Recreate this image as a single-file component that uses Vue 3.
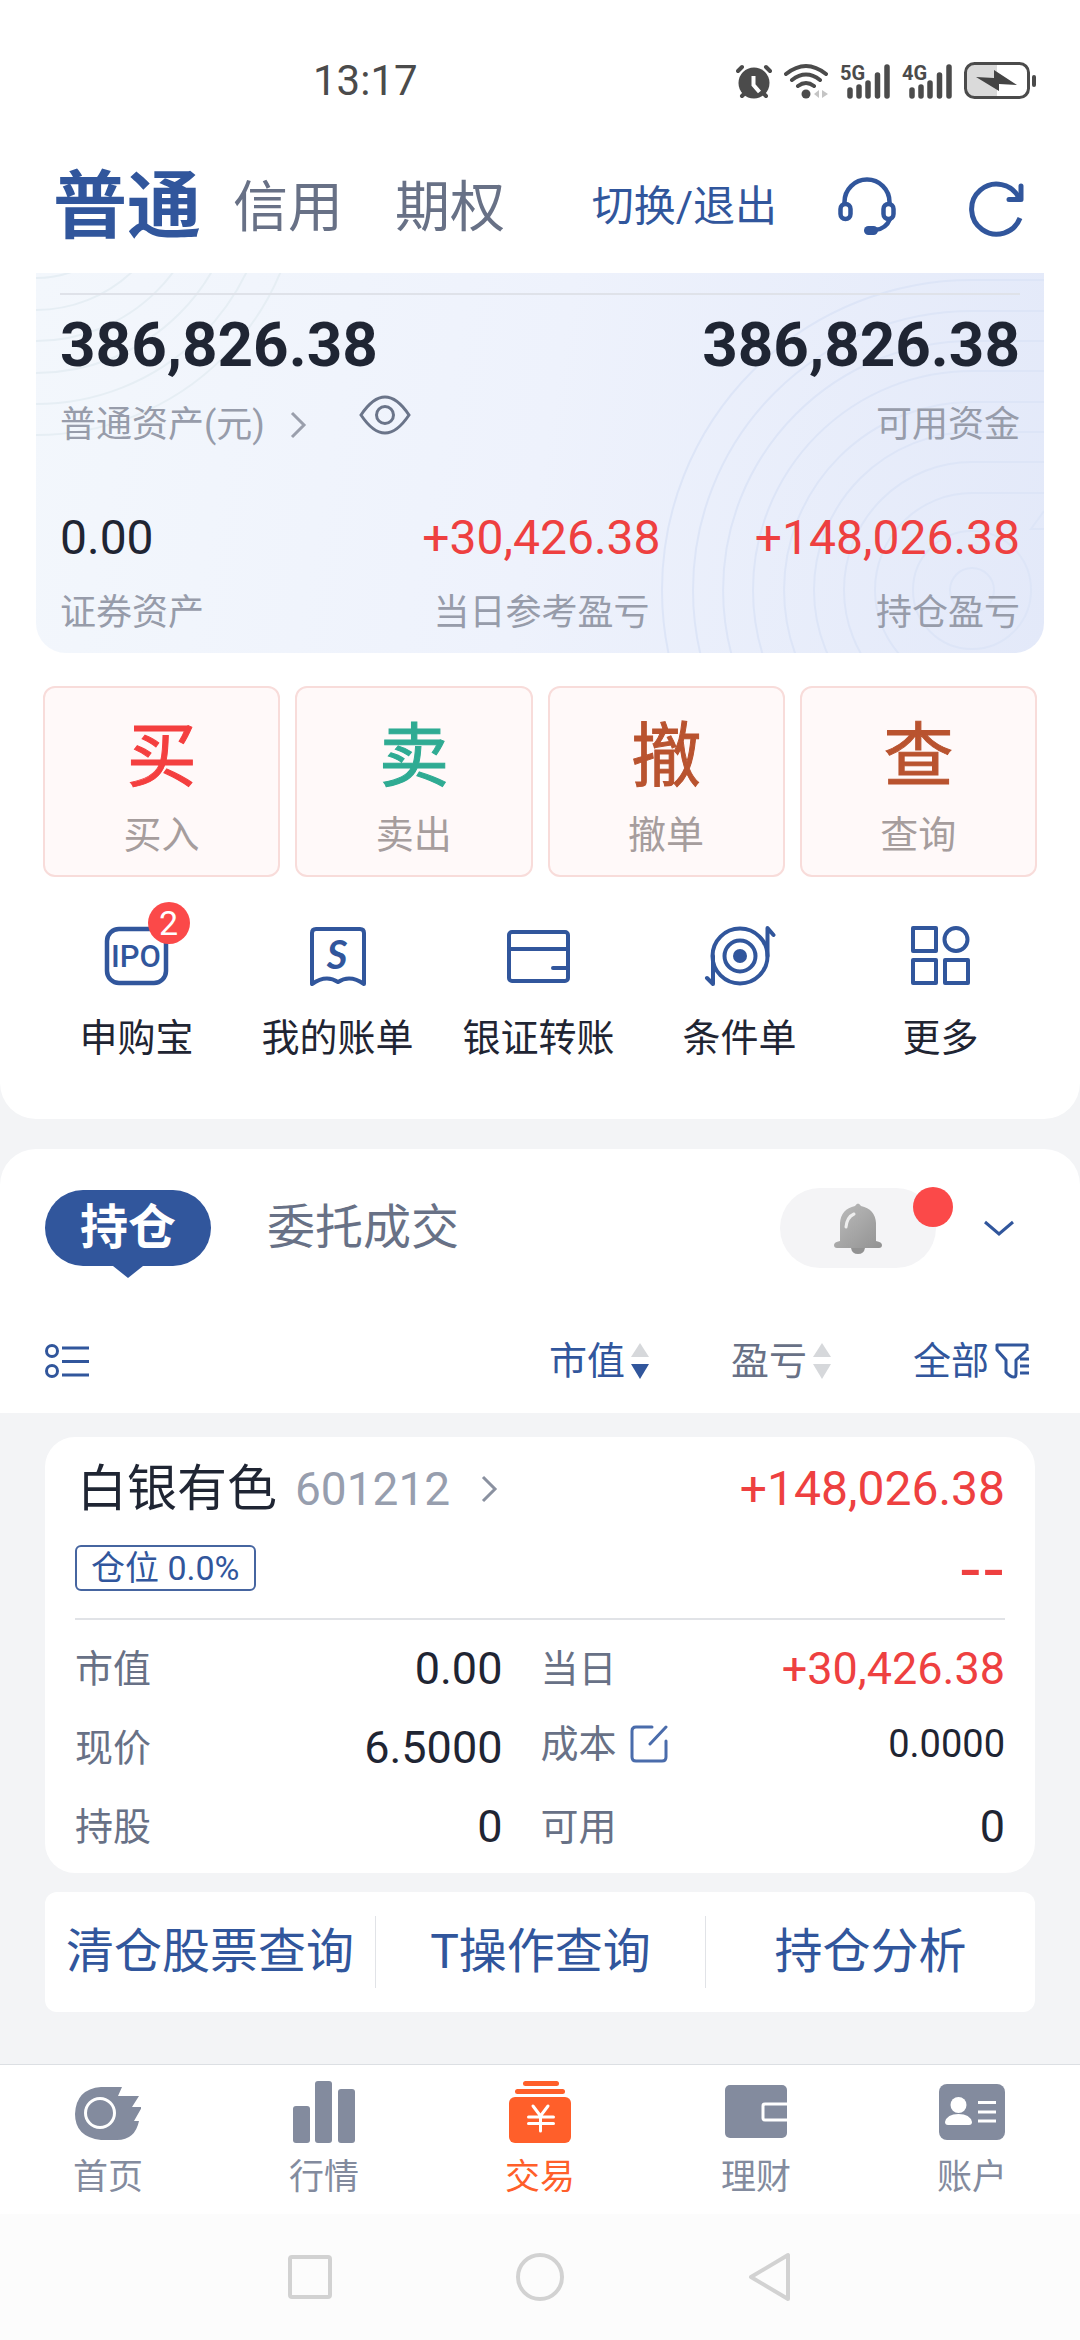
<script setup>
import { ref } from 'vue'

const accountTabs = ['普通', '信用', '期权']
const activeAccount = ref('普通')

const assetsVisible = ref(true)

const actions = [
  { glyph: '买', label: '买入', tone: 'red' },
  { glyph: '卖', label: '卖出', tone: 'green' },
  { glyph: '撤', label: '撤单', tone: 'brown' },
  { glyph: '查', label: '查询', tone: 'brown' },
]

const shortcuts = [
  { id: 'ipo', label: '申购宝', badge: 2 },
  { id: 'bill', label: '我的账单' },
  { id: 'bank', label: '银证转账' },
  { id: 'condition', label: '条件单' },
  { id: 'more', label: '更多' },
]

const sorts = [
  { key: 'value', label: '市值' },
  { key: 'profit', label: '盈亏' },
]
const sortKey = ref('value')

const stock = {
  name: '白银有色',
  code: '601212',
  profit: '+148,026.38',
  ratio: '0.0%',
  cells: [
    { label: '市值', value: '0.00' },
    { label: '当日', value: '+30,426.38', up: true },
    { label: '现价', value: '6.5000' },
    { label: '成本', value: '0.0000', editable: true },
    { label: '持股', value: '0' },
    { label: '可用', value: '0' },
  ],
}

const tools = ['清仓股票查询', 'T操作查询', '持仓分析']

const navItems = [
  { id: 'home', label: '首页' },
  { id: 'market', label: '行情' },
  { id: 'trade', label: '交易' },
  { id: 'wealth', label: '理财' },
  { id: 'account', label: '账户' },
]
const activeNav = ref('trade')

// Radii of the contour lines behind the asset panel
const leftArcs = [108, 140, 171, 203, 234, 265]
const rightArcs = [97, 128, 158, 188, 219, 249, 279, 310]
</script>

<template>
  <div class="page">
    <section class="top">
      <div class="status">
        <span class="clock">13:17</span>
        <svg width="36" height="36" viewBox="0 0 36 36" fill="none" stroke="#4b4b4b" stroke-width="4" stroke-linecap="round">
          <circle cx="18" cy="20" r="15.5" fill="#4b4b4b" stroke="none" />
          <path d="M2 8L6 4M34 8L30 4M6 33l4-4M30 33l-4-4" />
          <path d="M17.500 13v9l6 7" stroke="#fff" stroke-linecap="butt" />
        </svg>
        <svg width="44" height="36" viewBox="0 0 44 36" fill="none" stroke="#4b4b4b" stroke-width="4" stroke-linecap="round">
          <path d="M2 11Q22 -5 42 11M8 17Q22 6 36 17M14 23Q22 17 30 23" />
          <circle cx="22" cy="31" r="4.500" fill="#4b4b4b" stroke="none" />
          <path d="M35 27v8l-5-4zM38 27v8l6-4z" fill="#c4c4c4" stroke="none" />
        </svg>
        <svg v-for="net in ['5G', '4G']" :key="net" width="50" height="48" viewBox="0 0 50 48">
          <text x="0" y="23" class="net">{{ net }}</text>
          <path d="M10 33v6M19 30v9M28 26v13M37.500 18v21M47 10v29" stroke="#4b4b4b" stroke-width="5.500" stroke-linecap="round" />
        </svg>
        <svg width="73" height="38" viewBox="0 0 73 38">
          <path d="M9 3h24v32H9q-6 0-6-6V9q0-6 6-6z" fill="#dadada" />
          <rect x="1.500" y="1.500" width="63" height="34" rx="9" fill="none" stroke="#4b4b4b" stroke-width="3" />
          <path d="M12 15l18 1V8l23 15-18-1v7z" fill="#444" />
          <rect x="68" y="13" width="4" height="12" rx="2" fill="#4b4b4b" />
        </svg>
      </div>

      <header class="header">
        <button
          v-for="tab in accountTabs"
          :key="tab"
          :class="['account', { active: tab === activeAccount }]"
          @click="activeAccount = tab"
        >
          {{ tab }}
        </button>
        <a class="switch" href="#">切换/退出</a>
        <button class="icon-btn" aria-label="客服">
          <svg width="60" height="60" viewBox="0 0 60 60" fill="none" stroke="#31569c" stroke-width="4.500">
            <path d="M7.500 27v-2a22.500 22.500 0 0 1 45 0v2" />
            <rect x="3.500" y="27" width="10" height="15" rx="5" />
            <rect x="46.500" y="27" width="10" height="15" rx="5" />
            <path d="M53 42q-4 10-15 11" />
            <rect x="27" y="49" width="14" height="9" rx="4.500" fill="#31569c" stroke="none" />
          </svg>
        </button>
        <button class="icon-btn refresh" aria-label="刷新">
          <svg width="56" height="60" viewBox="0 0 56 60" fill="none" stroke="#31569c" stroke-width="5" stroke-linejoin="round">
            <path d="M51 41A25 25 0 1 1 50 21" />
            <path d="M52 9v13.500H40" stroke-linecap="round" />
          </svg>
        </button>
      </header>

      <div class="assets">
        <svg class="contours" viewBox="0 0 1008 380" preserveAspectRatio="xMaxYMin slice" fill="none" stroke-width="2">
          <circle v-for="r in leftArcs" :key="r" cx="0" cy="-103" :r="r" stroke="#e6eef4" />
          <g stroke="#dde5f7">
            <path v-for="r in rightArcs" :key="r" :d="`M1008 ${317 - r}H936a${r} ${r} 0 0 0 0 ${2 * r}`" />
            <circle cx="936" cy="317" r="22" />
            <circle cx="936" cy="317" r="59" />
            <path d="M1008 238l-13 18h13" />
          </g>
        </svg>
        <div class="asset-main">
          <div>
            <div class="total">386,826.38</div>
            <div class="caption-row">
              <a class="caption" href="#">普通资产(元)</a>
              <svg class="caption-arrow" width="18" height="28" viewBox="0 0 18 28" fill="none" stroke="#9a9fac" stroke-width="3">
                <path d="M3 2l12 12L3 26" />
              </svg>
              <button class="icon-btn eye" aria-label="显示资产" @click="assetsVisible = !assetsVisible">
                <svg width="52" height="40" viewBox="0 0 52 40" fill="none" stroke="#6a7489" stroke-width="3">
                  <path d="M2 20Q14 2 26 2T50 20Q38 38 26 38T2 20z" />
                  <circle cx="26" cy="20" r="8.500" />
                </svg>
              </button>
            </div>
          </div>
          <div class="right">
            <div class="total">386,826.38</div>
            <div class="caption-row"><span class="caption">可用资金</span></div>
          </div>
        </div>
        <div class="asset-sub">
          <div>
            <div class="amount">0.00</div>
            <div class="caption">证券资产</div>
          </div>
          <div class="center">
            <div class="amount up">+30,426.38</div>
            <div class="caption">当日参考盈亏</div>
          </div>
          <div class="right">
            <div class="amount up">+148,026.38</div>
            <div class="caption">持仓盈亏</div>
          </div>
        </div>
      </div>

      <div class="actions">
        <button v-for="action in actions" :key="action.label" class="action">
          <span :class="['glyph', action.tone]">{{ action.glyph }}</span>
          <span class="action-label">{{ action.label }}</span>
        </button>
      </div>

      <div class="shortcuts">
        <a v-for="item in shortcuts" :key="item.id" class="shortcut" href="#">
          <span class="shortcut-icon">
            <svg width="72" height="64" viewBox="0 0 72 64" fill="none" stroke="#31569c" stroke-width="4" stroke-linecap="round" stroke-linejoin="round">
              <template v-if="item.id === 'ipo'">
                <rect x="6" y="5" width="59" height="54" rx="12" stroke-width="4.500" />
                <text x="35" y="43" class="ipo">IPO</text>
              </template>
              <template v-else-if="item.id === 'bill'">
                <path d="M10 60V9q0-4 4-4h44q4 0 4 4v51q-14-10-26-2q-12-8-26 2z" />
                <text x="35" y="45" class="bill">S</text>
              </template>
              <template v-else-if="item.id === 'bank'">
                <rect x="6" y="8" width="59" height="49" rx="3" />
                <path d="M6 25h59M50 44h15" />
              </template>
              <template v-else-if="item.id === 'condition'">
                <circle cx="36" cy="32" r="27.500" />
                <circle cx="36" cy="32" r="15.500" />
                <circle cx="36" cy="32" r="7" fill="#31569c" stroke="none" />
                <path d="M63.500 32V4l6 7M9 32v28l-6-6" />
              </template>
              <template v-else>
                <rect x="8" y="4" width="23" height="23" />
                <circle cx="51" cy="15.500" r="11.500" />
                <rect x="8" y="36" width="23" height="23" />
                <rect x="40" y="36" width="23" height="23" />
              </template>
            </svg>
            <span v-if="item.badge" class="badge">{{ item.badge }}</span>
          </span>
          <span>{{ item.label }}</span>
        </a>
      </div>
    </section>

    <section class="positions">
      <div class="position-tabs">
        <button class="pill">持仓</button>
        <button class="tab">委托成交</button>
        <button class="bell" aria-label="提醒">
          <svg width="48" height="52" viewBox="0 0 48 52">
            <defs>
              <linearGradient id="bell" x1="0" y1="0" x2="1" y2="1">
                <stop offset="0" stop-color="#bdbdbd" />
                <stop offset="1" stop-color="#929292" />
              </linearGradient>
            </defs>
            <path d="M21 4q3-5 6 0q14 3 15 17v18q6 1 6 4q0 3-3 3H3q-3 0-3-3q0-3 6-4V21Q7 7 21 4z" fill="url(#bell)" />
            <path d="M17 46h14q-1 6-7 6t-7-6z" fill="#929292" />
            <path d="M12 25q1-10 8-13" fill="none" stroke="#eee" stroke-width="3" stroke-linecap="round" />
          </svg>
          <span class="dot"></span>
        </button>
        <button class="icon-btn" aria-label="展开">
          <svg width="32" height="18" viewBox="0 0 32 18" fill="none" stroke="#31569c" stroke-width="3">
            <path d="M2 3l14 12L30 3" />
          </svg>
        </button>
      </div>

      <div class="sorts">
        <button class="icon-btn list" aria-label="列表">
          <svg width="44" height="36" viewBox="0 0 44 36" fill="none" stroke="#31569c" stroke-width="3">
            <circle cx="7" cy="8" r="5.500" />
            <circle cx="7" cy="28" r="5.500" />
            <path d="M17 5h27M17 18.500h27M17 32h27" />
          </svg>
        </button>
        <button
          v-for="sort in sorts"
          :key="sort.key"
          :class="['sort', { active: sort.key === sortKey }]"
          @click="sortKey = sort.key"
        >
          {{ sort.label }}
          <svg width="18" height="36" viewBox="0 0 18 36">
            <path d="M0 14L9 0l9 14z" fill="#d6d8db" />
            <path class="down" d="M0 21l9 15 9-15z" />
          </svg>
        </button>
        <button class="sort active">
          全部
          <svg width="34" height="36" viewBox="0 0 34 36" fill="none" stroke="#31569c" stroke-width="3" stroke-linejoin="round">
            <path d="M32 8V2H2v5l9 10v12q4 5 8 5q2 0 2-3V17l10-9M25 16h9M25 23h9M25 30h9" />
          </svg>
        </button>
      </div>
    </section>

    <main class="holdings">
      <article class="stock">
        <div class="stock-head">
          <h2>{{ stock.name }}</h2>
          <span class="code">{{ stock.code }}</span>
          <svg width="18" height="28" viewBox="0 0 18 28" fill="none" stroke="#8a91a0" stroke-width="3">
            <path d="M3 2l12 12L3 26" />
          </svg>
          <span class="stock-profit">{{ stock.profit }}</span>
        </div>
        <div class="stock-meta">
          <span class="ratio">仓位 {{ stock.ratio }}</span>
          <span class="rate">--</span>
        </div>
        <dl class="cells">
          <div v-for="cell in stock.cells" :key="cell.label" :class="['cell', { cost: cell.editable }]">
            <dt>{{ cell.label }}</dt>
            <dd v-if="cell.editable" class="edit">
              <button class="icon-btn" aria-label="修改成本">
                <svg width="38" height="38" viewBox="0 0 38 38" fill="none" stroke="#4a6cab" stroke-width="3" stroke-linecap="round">
                  <path d="M22 2H6q-4 0-4 4v26q0 4 4 4h26q4 0 4-4V16M20 19L36 2" />
                </svg>
              </button>
            </dd>
            <dd :class="['value', { up: cell.up }]">{{ cell.value }}</dd>
          </div>
        </dl>
      </article>

      <div class="tools">
        <a v-for="tool in tools" :key="tool" href="#">{{ tool }}</a>
      </div>
    </main>

    <nav class="nav">
      <a
        v-for="item in navItems"
        :key="item.id"
        href="#"
        :class="{ active: item.id === activeNav }"
        @click.prevent="activeNav = item.id"
      >
        <svg width="66" height="64" viewBox="0 0 66 64" fill="currentColor">
          <template v-if="item.id === 'home'">
            <path d="M26 7h21l-4 9h21l-7 11h10l-8 14h5q-4 19-22 19H26Q0 57 0 34Q1 9 26 7z" />
            <circle cx="25" cy="33" r="14.500" fill="none" stroke="#fff" stroke-width="3" />
          </template>
          <template v-else-if="item.id === 'market'">
            <rect x="2" y="26" width="17" height="37" rx="3" />
            <rect x="24" y="1" width="17" height="62" rx="3" />
            <rect x="47" y="9" width="17" height="54" rx="3" />
          </template>
          <template v-else-if="item.id === 'trade'">
            <rect x="16" y="1" width="36" height="5" rx="2.500" />
            <rect x="8" y="9" width="50" height="5" rx="2.500" />
            <rect x="2" y="17" width="62" height="46" rx="6" />
            <path d="M26 26l7.500 10L41 26M33.500 36v15M21.500 37h25M21.500 43.500h25" fill="none" stroke="#fff" stroke-width="3" stroke-linecap="round" />
          </template>
          <template v-else-if="item.id === 'wealth'">
            <rect x="2" y="5" width="62" height="53" rx="5" />
            <path d="M64 24H42q-2 0-2 2v12q0 2 2 2h22" fill="none" stroke="#fff" stroke-width="3" />
          </template>
          <template v-else>
            <rect x="0" y="4" width="66" height="56" rx="8" />
            <circle cx="19.500" cy="25" r="8" fill="#fff" />
            <path d="M6 42q2-8 13.500-8T33 42q0 3-3 3H9q-3 0-3-3z" fill="#fff" />
            <path d="M39 22.500h18M39 32h18M39 41h18" stroke="#fff" stroke-width="3" />
          </template>
        </svg>
        {{ item.label }}
      </a>
    </nav>

    <div class="system">
      <svg width="50" height="50" viewBox="0 0 50 50">
        <rect x="5" y="5" width="40" height="40" rx="2" />
      </svg>
      <svg width="50" height="50" viewBox="0 0 50 50">
        <circle cx="25" cy="25" r="22" />
      </svg>
      <svg width="50" height="50" viewBox="0 0 50 50">
        <path d="M43 3v44L6 25z" />
      </svg>
    </div>
  </div>
</template>

<style>
body {
  background: #f3f4f6;
}
</style>

<style scoped>
.page {
  display: flex;
  flex-direction: column;
  min-height: 100vh;
  background: #f3f4f6;
  color: #1f2533;
  font-family: Roboto, 'Noto Sans CJK SC', sans-serif;
  font-size: 38px;
  line-height: 44px;
}

button {
  padding: 0;
  border: 0;
  background: none;
  color: inherit;
  font: inherit;
  cursor: pointer;
}

a {
  color: inherit;
  text-decoration: none;
}

svg {
  display: block;
  flex: none;
}

.icon-btn {
  flex: none;
}

.up {
  color: #ee4040;
}

.top {
  padding-bottom: 59px;
  border-radius: 0 0 36px 36px;
  background: #fff;
}

.status {
  display: flex;
  align-items: center;
  gap: 12px;
  padding: 56px 43px 0 313px;
  color: #4b4b4b;
  line-height: 50px;
}

.clock {
  margin-right: auto;
  font-size: 42px;
}

.net {
  fill: #4b4b4b;
  font-size: 20px;
  font-weight: 700;
}

.header {
  display: flex;
  align-items: center;
  height: 96px;
  padding: 53px 55px 18px 53px;
  color: #31569c;
}

.account {
  margin-right: 52px;
  color: #687186;
  font-size: 55px;
  line-height: 72px;
}

.account.active {
  margin-right: 32px;
  color: #31569c;
  font-size: 74px;
  font-weight: 700;
}

.switch {
  margin-right: 60px;
  margin-left: auto;
  font-size: 42px;
}

.refresh {
  margin-left: 72px;
}

.assets {
  position: relative;
  margin: 0 36px;
  padding: 20px 24px 18px;
  border-radius: 0 0 30px 30px;
  background: linear-gradient(100deg, #f3f7fc, #eef2fc 50%, #e3e9f9);
  overflow: hidden;
}

.contours {
  position: absolute;
  inset: 0;
  width: 100%;
  height: 100%;
}

.asset-main,
.asset-sub {
  position: relative;
  display: flex;
  justify-content: space-between;
}

.asset-main {
  padding-top: 20px;
  border-top: 2px solid #dfe2e9;
}

.asset-sub {
  padding-top: 53px;
}

.right {
  text-align: right;
}

.center {
  margin-left: 124px;
  text-align: center;
}

.total {
  font-size: 62px;
  font-weight: 700;
  line-height: 60px;
}

.caption-row {
  display: flex;
  align-items: center;
  height: 60px;
  margin-top: 20px;
}

.right .caption-row {
  justify-content: flex-end;
}

.caption {
  color: #979caa;
  font-size: 36px;
}

.caption-arrow {
  margin: 0 52px 0 24px;
}

.eye {
  padding-bottom: 20px;
}

.amount {
  margin-bottom: 23px;
  font-size: 48px;
  line-height: 60px;
}

.actions {
  display: grid;
  grid-template-columns: repeat(4, 1fr);
  gap: 15px;
  padding: 33px 43px 0;
}

.action {
  display: flex;
  flex-direction: column;
  align-items: center;
  gap: 18px;
  padding: 32px 0 18px;
  border: 2px solid #f8dcda;
  border-radius: 12px;
  background: #fff9f9;
}

.glyph {
  font-size: 70px;
  line-height: 75px;
  -webkit-text-stroke: 1px currentColor;
}

.red {
  color: #f43f3f;
}

.green {
  color: #2fab93;
}

.brown {
  color: #b9532f;
}

.action-label {
  color: #a69d9d;
}

.shortcuts {
  display: grid;
  grid-template-columns: repeat(5, 1fr);
  padding: 47px 39px 0 36px;
}

.shortcut {
  display: flex;
  flex-direction: column;
  align-items: center;
  gap: 28px;
}

.shortcut-icon {
  position: relative;
}

.ipo {
  fill: #31569c;
  stroke: none;
  font-size: 31px;
  font-weight: 500;
  text-anchor: middle;
}

.bill {
  fill: #31569c;
  stroke: none;
  font-family: Lato, sans-serif;
  font-size: 40px;
  font-style: italic;
  font-weight: 700;
  text-anchor: middle;
}

.badge {
  position: absolute;
  top: -22px;
  right: -17px;
  width: 42px;
  border-radius: 50%;
  background: #fb4949;
  color: #fff;
  font-size: 34px;
  line-height: 42px;
  text-align: center;
}

.positions {
  margin-top: 30px;
  padding: 39px 45px 28px;
  border-radius: 36px 36px 0 0;
  background: #fff;
}

.position-tabs {
  display: flex;
  align-items: center;
  padding-right: 20px;
  font-size: 48px;
}

.pill {
  position: relative;
  padding: 0 35px;
  border-radius: 38px;
  background: #31569c;
  color: #fff;
  font-weight: 700;
  line-height: 76px;
}

.pill::after {
  content: '';
  position: absolute;
  bottom: -12px;
  left: 50%;
  margin-left: -15px;
  border: 15px solid transparent;
  border-top: 12px solid #31569c;
  border-bottom: 0;
}

.tab {
  margin-right: auto;
  margin-left: 56px;
  color: #687186;
}

.bell {
  position: relative;
  margin-right: 47px;
  padding: 14px 54px;
  border-radius: 40px;
  background: #f4f4f6;
}

.dot {
  position: absolute;
  top: -1px;
  right: -17px;
  width: 40px;
  height: 40px;
  border-radius: 50%;
  background: #fb4949;
}

.sorts {
  display: flex;
  align-items: center;
  gap: 82px;
  padding: 69px 6px 0 0;
}

.list {
  margin-right: auto;
}

.sort {
  display: flex;
  align-items: center;
  gap: 6px;
  color: #687186;
  line-height: 48px;
}

.sort.active {
  color: #31569c;
}

.down {
  fill: #d6d8db;
}

.active .down {
  fill: #31569c;
}

.holdings {
  padding: 24px 45px 52px;
}

.stock {
  padding: 22px 30px 7px;
  border-radius: 30px;
  background: #fff;
}

.stock-head {
  display: flex;
  align-items: center;
  line-height: 60px;
}

h2 {
  margin: 0 18px 0 2px;
  font-size: 50px;
  font-weight: 400;
}

.code {
  margin-right: 30px;
  color: #979eae;
  font-size: 46px;
}

.stock-profit {
  margin-left: auto;
  color: #ee4040;
  font-size: 48px;
}

.stock-meta {
  display: flex;
  align-items: center;
  justify-content: space-between;
  padding: 26px 0 27px;
  border-bottom: 2px solid #e1e3e7;
}

.ratio {
  padding: 0 14px;
  border: 2px solid #4665a0;
  border-radius: 6px;
  color: #31569c;
  font-size: 34px;
  line-height: 42px;
}

.rate {
  color: #ee4040;
  font-family: 'DejaVu Sans', sans-serif;
  font-size: 64px;
}

.cells {
  display: grid;
  grid-template-columns: 427fr 464fr;
  column-gap: 38px;
  margin: 0;
  padding-top: 9px;
}

.cell {
  display: flex;
  align-items: center;
  height: 79px;
}

.cell dt {
  color: #687186;
}

.cell dd {
  margin: 0;
}

.cell .edit {
  display: flex;
  margin-left: 14px;
}

.cell .value {
  margin-left: auto;
  font-size: 45px;
}

.cell.cost {
  height: 71px;
}

.cost .value {
  font-size: 38px;
}

.tools {
  display: grid;
  grid-template-columns: repeat(3, 1fr);
  margin-top: 19px;
  padding: 24px 0;
  border-radius: 12px;
  background: #fff;
  color: #31569c;
  font-size: 48px;
  line-height: 72px;
  text-align: center;
}

.tools a + a {
  border-left: 1px solid #e1e3e7;
}

.nav {
  display: grid;
  grid-template-columns: repeat(5, 1fr);
  margin-top: auto;
  padding: 15px 0 14px;
  border-top: 1px solid #dcdfe3;
  background: #fff;
  color: #838b9e;
  font-size: 35px;
}

.nav a {
  display: flex;
  flex-direction: column;
  align-items: center;
  gap: 12px;
}

.nav .active {
  color: #ff5f2a;
}

.system {
  display: flex;
  align-items: center;
  justify-content: center;
  gap: 180px;
  height: 126px;
  background: #fcfcfc;
}

.system svg {
  fill: none;
  stroke: #d2d2d2;
  stroke-width: 4;
  stroke-linejoin: round;
}
</style>
